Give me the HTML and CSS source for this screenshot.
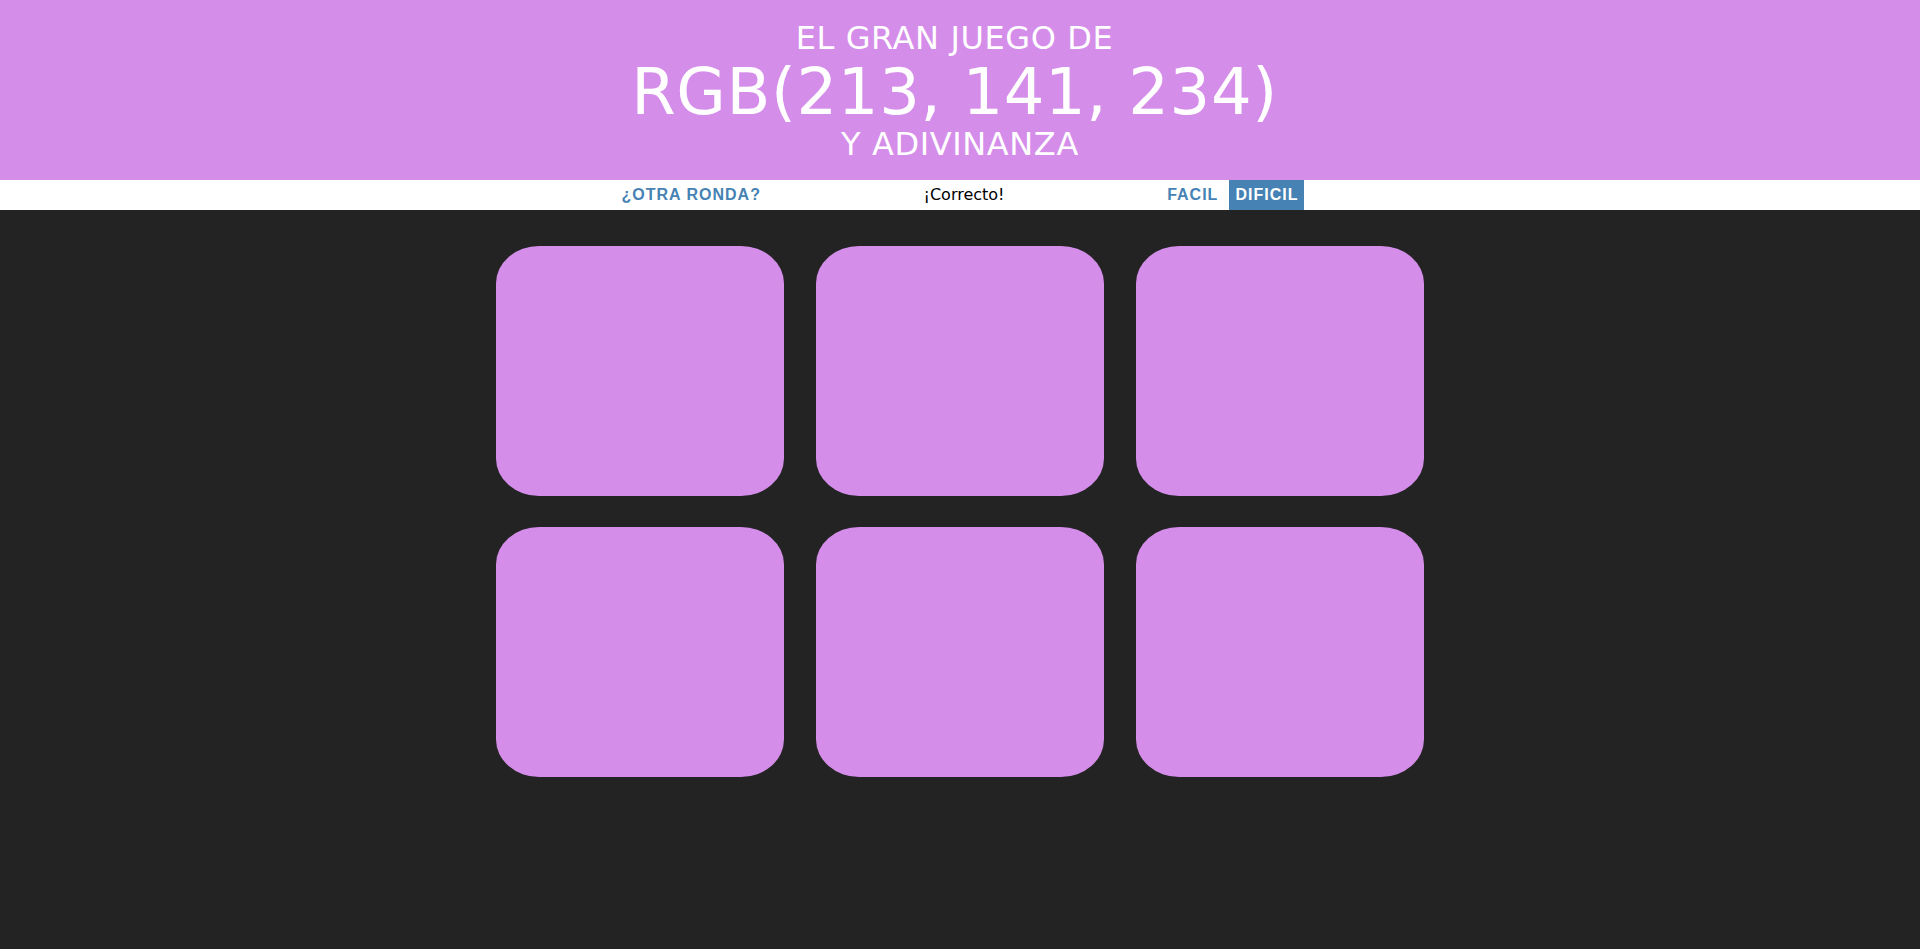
FILE: index.html
```html
<!DOCTYPE html>
<html lang="es">
<head>
<meta charset="utf-8">
<title>Color Game</title>
<link rel="stylesheet" href="styles.css">
</head>
<body>
<h1 class="title">
  <span class="title-line title-shifted">El gran juego de</span>
  <span class="title-color title-shifted">RGB(213, 141, 234)</span>
  <span class="title-line">y adivinanza</span>
</h1>
<div class="stripe">
  <button class="btn">¿Otra ronda?</button>
  <span class="message">¡Correcto!</span>
  <button class="btn">Facil</button>
  <button class="btn selected">Dificil</button>
</div>
<div class="container">
  <div class="square"></div>
  <div class="square"></div>
  <div class="square"></div>
  <div class="square"></div>
  <div class="square"></div>
  <div class="square"></div>
</div>
</body>
</html>
```

FILE: styles.css
```css
body {
  margin: 0;
  background-color: #232323;
  font-family: "DejaVu Sans", Verdana, sans-serif;
}

.title {
  margin: 0;
  padding: 20px 0 19.2px;
  background-color: rgb(213, 141, 234);
  color: #ffffff;
  text-align: center;
  text-transform: uppercase;
  font-weight: normal;
  font-size: 32px;
  line-height: 1.1;
  letter-spacing: 0.6px;
}

.title-line {
  display: block;
  padding-top: 2px;
  line-height: 33.2px;
}

.title-color {
  display: block;
  font-size: 200%;
  padding-top: 5px;
  line-height: 65.4px;
}

.title-shifted {
  padding-right: 11px;
}

.stripe {
  background-color: #ffffff;
  height: 30px;
  text-align: center;
  color: #000000;
  font-size: 16px;
}

.btn {
  border: none;
  background: none;
  text-transform: uppercase;
  height: 100%;
  font-family: "Liberation Sans", Arial, sans-serif;
  font-weight: 700;
  font-size: inherit;
  color: steelblue;
  letter-spacing: 1px;
  padding: 1px 6px;
  margin: 0;
  outline: none;
  cursor: pointer;
}

.btn.selected {
  color: #ffffff;
  background-color: steelblue;
}

.message {
  display: inline-block;
  width: 20%;
}

.container {
  width: 960px;
  margin: 20px auto;
  display: flex;
  flex-wrap: wrap;
}

.square {
  width: 30%;
  padding-bottom: 26%;
  margin: 1.66%;
  background-color: rgb(213, 141, 234);
  border-radius: 15%;
}
```
